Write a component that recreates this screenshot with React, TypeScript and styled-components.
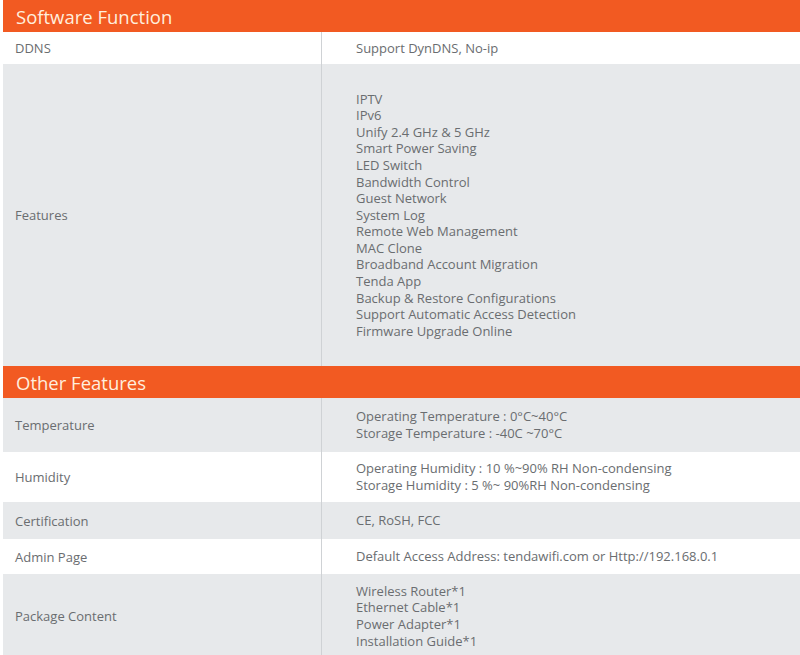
import React from "react";
import styled, { createGlobalStyle } from "styled-components";

const Global = createGlobalStyle`
  body { margin: 0; background: #fff; font-family: "Open Sans", "Noto Sans", sans-serif; }
`;

type Row = { label: string; values: string[]; grey?: boolean; height: number };

const software: Row[] = [
  { label: "DDNS", values: ["Support DynDNS, No-ip"], height: 32 },
  {
    label: "Features",
    grey: true,
    height: 302,
    values: [
      "IPTV", "IPv6", "Unify 2.4 GHz & 5 GHz", "Smart Power Saving", "LED Switch",
      "Bandwidth Control", "Guest Network", "System Log", "Remote Web Management",
      "MAC Clone", "Broadband Account Migration", "Tenda App",
      "Backup & Restore Configurations", "Support Automatic Access Detection",
      "Firmware Upgrade Online",
    ],
  },
];

const other: Row[] = [
  { label: "Temperature", grey: true, height: 54, values: ["Operating Temperature : 0°C~40°C", "Storage Temperature : -40C ~70°C"] },
  { label: "Humidity", height: 50, values: ["Operating Humidity : 10 %~90% RH Non-condensing", "Storage Humidity : 5 %~ 90%RH Non-condensing"] },
  { label: "Certification", grey: true, height: 37, values: ["CE, RoSH, FCC"] },
  { label: "Admin Page", height: 35, values: ["Default Access Address: tendawifi.com or Http://192.168.0.1"] },
  { label: "Package Content", grey: true, height: 84, values: ["Wireless Router*1", "Ethernet Cable*1", "Power Adapter*1", "Installation Guide*1"] },
];

function App() {
  const renderRows = (rows: Row[]) =>
    rows.map((r) => (
      <TableRow key={r.label} $grey={r.grey} style={{ height: r.height }}>
        <Label>{r.label}</Label>
        <Value>
          {r.values.map((v) => (
            <Line key={v}>{v}</Line>
          ))}
        </Value>
      </TableRow>
    ));

  return (
    <Page>
      <Global />
      <SectionHeader>Software Function</SectionHeader>
      {renderRows(software)}
      <SectionHeader>Other Features</SectionHeader>
      {renderRows(other)}
    </Page>
  );
}

const Page = styled.div`
  width: 800px;
  height: 655px;
  overflow: hidden;
  display: flex;
  flex-direction: column;
`;

const SectionHeader = styled.div`
  height: 32px;
  flex-shrink: 0;
  margin-left: 3px;
  padding-left: 13px;
  display: flex;
  align-items: center;
  background: #f25a22;
  color: #ffeedd;
  font-size: 18.5px;
`;

const TableRow = styled.div<{ $grey?: boolean }>`
  flex-shrink: 0;
  display: grid;
  grid-template-columns: 318px 1fr;
  margin-left: 3px;
  background: ${(p) => (p.$grey ? "#e7e9eb" : "#ffffff")};
  color: #6a6d70;
  font-size: 13px;
`;

const Label = styled.div`
  display: flex;
  align-items: center;
  padding-left: 12px;
`;

const Value = styled.div`
  display: flex;
  flex-direction: column;
  justify-content: center;
  padding-left: 34px;
  border-left: 1px solid #cfd2d5;
`;

const Line = styled.div`
  line-height: 16.6px;
`;

export default App;
